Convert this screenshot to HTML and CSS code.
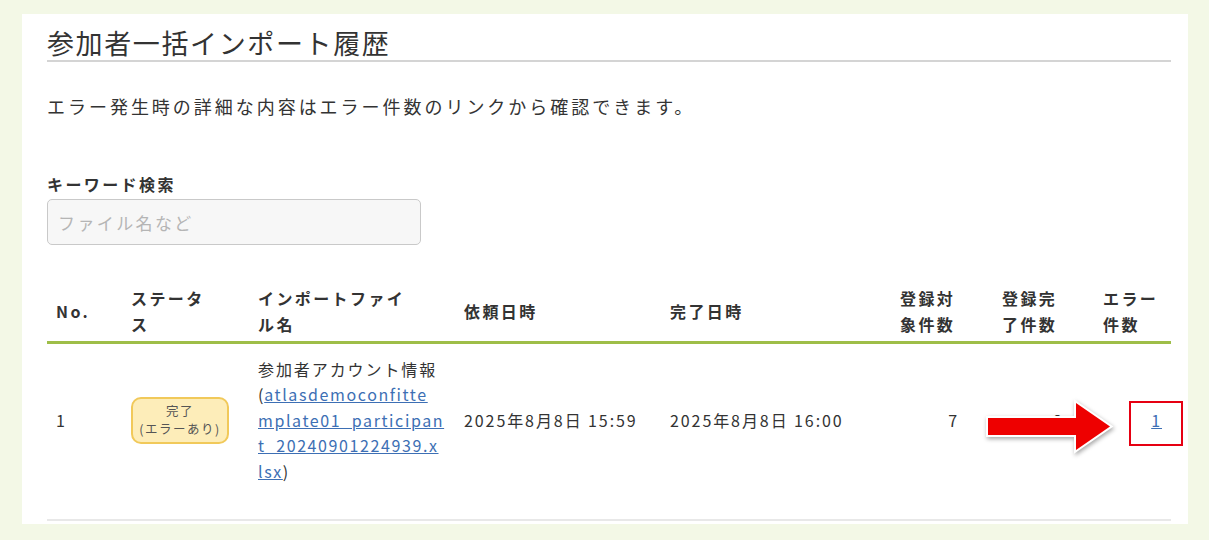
FILE: index.html
```html
<!DOCTYPE html>
<html lang="ja">
<head>
<meta charset="utf-8">
<title>参加者一括インポート履歴</title>
<link rel="stylesheet" href="styles.css">
</head>
<body>
<div class="page">
  <section class="card">
    <h1 class="title">参加者一括インポート履歴</h1>
    <p class="lead">エラー発生時の詳細な内容はエラー件数のリンクから確認できます。</p>
    <div class="search">
      <label class="search-label" for="kw">キーワード検索</label>
      <input id="kw" class="search-input" type="text" placeholder="ファイル名など">
    </div>
    <table class="history">
      <colgroup>
        <col class="c-no"><col class="c-status"><col class="c-file"><col class="c-req"><col class="c-done"><col class="c-target"><col class="c-ok"><col class="c-err">
      </colgroup>
      <thead>
        <tr>
          <th>No.</th>
          <th>ステータ<br>ス</th>
          <th>インポートファイ<br>ル名</th>
          <th>依頼日時</th>
          <th>完了日時</th>
          <th>登録対<br>象件数</th>
          <th>登録完<br>了件数</th>
          <th>エラー<br>件数</th>
        </tr>
      </thead>
      <tbody>
        <tr>
          <td>1</td>
          <td><span class="badge">完了<br>(エラーあり)</span></td>
          <td class="file">参加者アカウント情報<wbr><span class="paren">(</span><a class="file-link" href="#">atlasdemoconfitte<wbr>mplate01_participan<wbr>t_20240901224939.x<wbr>lsx</a><span class="paren">)</span></td>
          <td>2025年8月8日 15:59</td>
          <td>2025年8月8日 16:00</td>
          <td class="num num-target">7</td>
          <td class="num num-ok">6</td>
          <td class="num num-err"><a href="#">1</a></td>
        </tr>
      </tbody>
    </table>
    <svg class="callout-arrow" width="140" height="69" viewBox="0 0 140 69" aria-hidden="true">
      <polygon points="8,25 96,25 96,10 130,33.5 96,57 96,42 8,42" />
    </svg>
    <div class="callout-box"></div>
  </section>
</div>
</body>
</html>
```
FILE: styles.css
```css
html, body {
  margin: 0;
  padding: 0;
  background: #f3f8e6;
}
body {
  font-family: "Noto Sans CJK JP", "Noto Sans", sans-serif;
  color: #333;
  font-size: 16px;
  letter-spacing: 0.15em;
}
.page {
  padding: 14px 21px 15px 22px;
}
.card {
  position: relative;
  background: #fff;
  padding: 12px 17px 3px 25px;
}
.title {
  margin: 0;
  font-size: 27px;
  font-weight: 400;
  letter-spacing: 0.06em;
  line-height: 34px;
  border-bottom: 2px solid #d4d4d4;
  color: #333;
}
.lead {
  margin: 30px 0 0;
  font-size: 18px;
  line-height: 29px;
  letter-spacing: 0.165em;
}
.search {
  margin-top: 50px;
  display: flex;
  flex-direction: column;
  align-items: flex-start;
}
.search-label {
  font-weight: 700;
  line-height: 26px;
  font-size: 16px;
}
.search-input {
  margin-top: 2px;
  box-sizing: border-box;
  width: 374px;
  height: 46px;
  border: 1px solid #c9c9c9;
  border-radius: 5px;
  background: #f7f7f7;
  padding: 0 10px;
  font-family: inherit;
  font-size: 17px;
  letter-spacing: 0.14em;
  color: #333;
}
.search-input::placeholder {
  color: #b5b5b5;
}
.history {
  margin-top: 30px;
  width: 1124px;
  border-collapse: collapse;
  table-layout: fixed;
}
.c-no { width: 75px; }
.c-status { width: 127px; }
.c-file { width: 206px; }
.c-req { width: 206px; }
.c-done { width: 230px; }
.c-target { width: 102px; }
.c-ok { width: 101px; }
.c-err { width: 77px; }
.history th {
  text-align: left;
  font-weight: 700;
  line-height: 26px;
  padding: 10px 9px 4px;
  vertical-align: middle;
  border-bottom: 3px solid #9ebe48;
}
.history td {
  line-height: 25.6px;
  letter-spacing: 0.12em;
  padding: 12.5px 9px 34.5px;
  vertical-align: middle;
  border-bottom: 2px solid #e8e8e8;
}
.file {
  letter-spacing: 0.15em;
}
.paren {
  letter-spacing: 0.05em;
}
.history a {
  color: #3d6fb4;
  text-decoration: underline;
}
.history .file-link {
  letter-spacing: 0.1em;
}
.num { text-align: right; }
.history td.num-target { padding-right: 34px; }
.history td.num-ok { padding-right: 31px; }
.history td.num-err { padding-right: 9px; }
.badge {
  display: inline-flex;
  align-items: center;
  justify-content: center;
  box-sizing: border-box;
  width: 98px;
  height: 47px;
  background: #fdedb9;
  border: 2px solid #f1c95a;
  border-radius: 10px;
  font-size: 12.5px;
  line-height: 18px;
  letter-spacing: 0.12em;
  text-align: center;
  color: #555;
}
.callout-arrow {
  position: absolute;
  left: 958px;
  top: 379px;
  overflow: visible;
  filter: drop-shadow(1px 2px 2px rgba(0, 0, 0, 0.35));
}
.callout-arrow polygon {
  fill: #ee0000;
  stroke: #fff;
  stroke-width: 4;
  stroke-linejoin: miter;
  paint-order: stroke;
}
.callout-box {
  position: absolute;
  left: 1107px;
  top: 387px;
  width: 54px;
  height: 45px;
  box-sizing: border-box;
  border: 2px solid #e60012;
}
```
